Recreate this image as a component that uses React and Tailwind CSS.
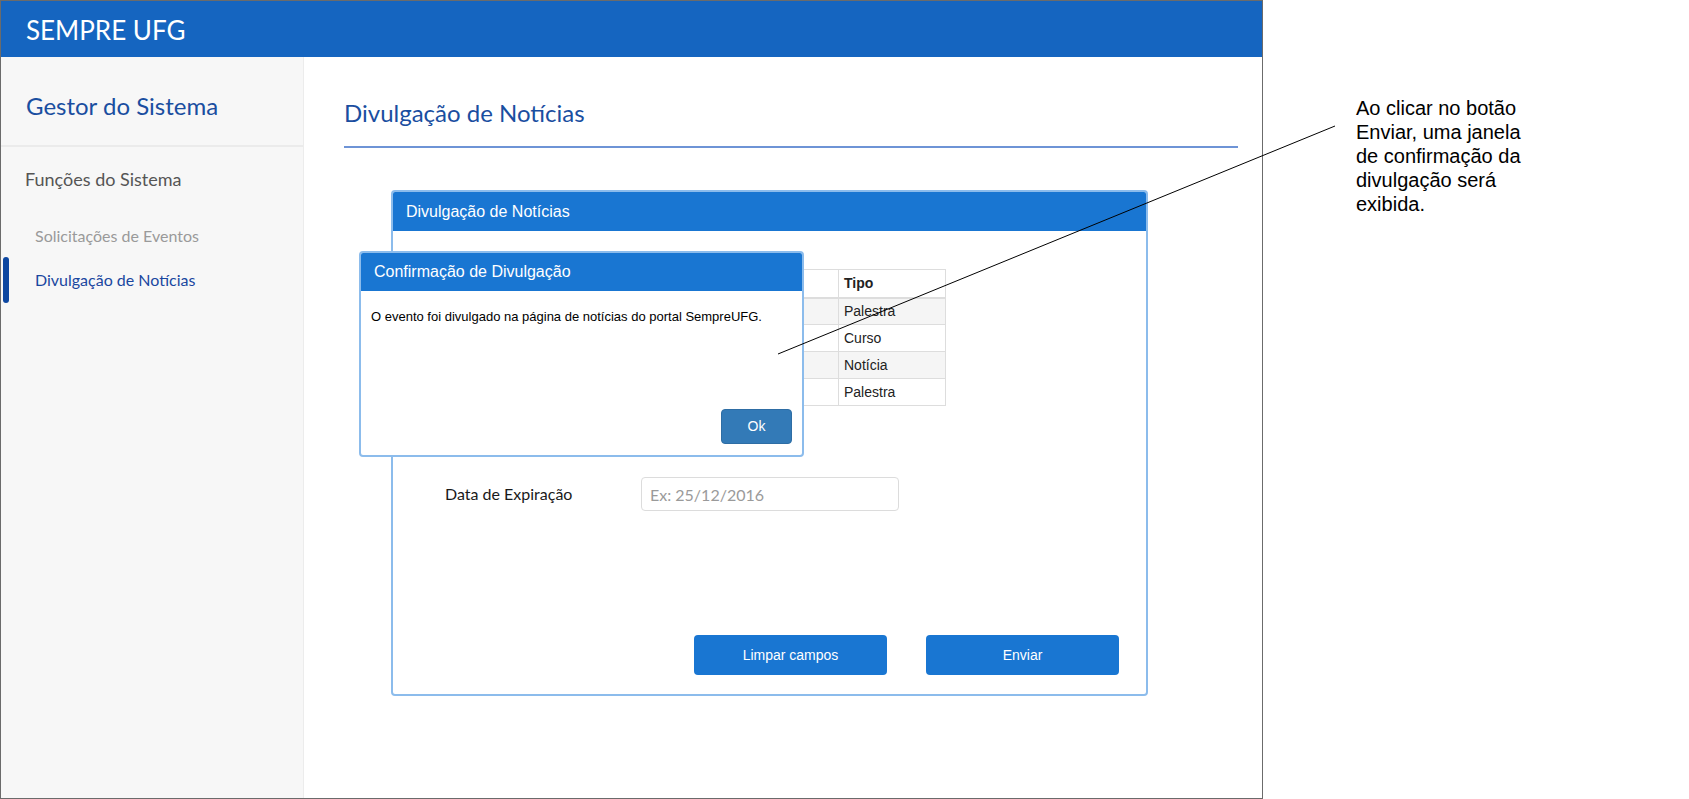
import React from "react";

const rows = [
  { t: "Semana de Integração", d: "10/11/2016", tipo: "Palestra" },
  { t: "Curso de Extensão", d: "15/11/2016", tipo: "Curso" },
  { t: "Encontro de Egressos", d: "20/11/2016", tipo: "Notícia" },
  { t: "Ciclo de Debates", d: "01/12/2016", tipo: "Palestra" },
];

export default function App() {
  return (
    <div className="relative w-[1689px] h-[799px] bg-white flex items-start overflow-hidden">
      {/* Mockup frame */}
      <div className="w-[1263px] h-[799px] border border-[#6b6b6b] flex flex-col shrink-0">
        <div className="h-[56px] bg-[#1565c0] flex items-center pl-[25px] shrink-0">
          <span className="text-white text-[26px] leading-none font-['Lato',sans-serif] pt-[2px]">SEMPRE UFG</span>
        </div>
        <div className="flex flex-1 min-h-0">
          {/* Sidebar */}
          <div className="w-[303px] bg-[#f7f7f7] border-r border-[#ececec] shrink-0 font-['Lato',sans-serif]">
            <div className="h-[90px] border-b-2 border-[#ebebeb] pl-[25px] pt-[34px]">
              <div className="text-[24px] leading-[30px] text-[#1a4ea0]">Gestor do Sistema</div>
            </div>
            <div className="pl-[24px] mt-[20px] text-[18px] leading-[24px] text-[#555]">Funções do Sistema</div>
            <div className="mt-[23px] flex flex-col">
              <div className="h-[44px] flex items-center">
                <div className="w-[6px] h-[44px] ml-[2px] rounded-full"></div>
                <span className="ml-[26px] text-[16px] text-[#9a9a9a]">Solicitações de Eventos</span>
              </div>
              <div className="h-[46px] flex items-center -mt-[1px]">
                <div className="w-[6px] h-[46px] ml-[2px] rounded-full bg-[#0d47a1]"></div>
                <span className="ml-[26px] text-[16px] text-[#1a47a0]">Divulgação de Notícias</span>
              </div>
            </div>
          </div>
          {/* Main */}
          <div className="flex-1 pl-[40px] pr-[24px] pt-[41px]">
            <div className="text-[24px] leading-[30px] text-[#1a4ea0] font-['Lato',sans-serif]">Divulgação de Notícias</div>
            <div className="mt-[18px] h-[2px] bg-[#6e94d6]"></div>
            <div className="ml-[47px] mt-[42px] w-[757px] h-[506px] rounded-[4px] border-2 border-[#8cbcec] overflow-hidden flex flex-col">
              <div className="h-[39px] bg-[#1976d2] flex items-center pl-[13px] shrink-0">
                <span className="text-white text-[16px] font-['Liberation_Sans',Arial,sans-serif]">Divulgação de Notícias</span>
              </div>
              <div className="flex-1 flex flex-col pl-[52px]">
                <table className="mt-[38px] w-[500px] table-fixed border-collapse text-[14px] text-[#222] font-['Liberation_Sans',Arial,sans-serif]">
                  <colgroup>
                    <col className="w-[250px]" />
                    <col className="w-[143px]" />
                    <col className="w-[107px]" />
                  </colgroup>
                  <thead>
                    <tr className="h-[28px]">
                      <th className="border border-[#dddddd] border-b-2 text-left font-bold px-[5px]">Título</th>
                      <th className="border border-[#dddddd] border-b-2 text-left font-bold px-[5px]">Data</th>
                      <th className="border border-[#dddddd] border-b-2 text-left font-bold px-[5px]">Tipo</th>
                    </tr>
                  </thead>
                  <tbody>
                    {rows.map((r, i) => (
                      <tr key={i} className={i % 2 === 0 ? "h-[27px] bg-[#f5f5f5]" : "h-[27px] bg-white"}>
                        <td className="border border-[#dddddd] px-[5px]">{r.t}</td>
                        <td className="border border-[#dddddd] px-[5px]">{r.d}</td>
                        <td className="border border-[#dddddd] px-[5px]">{r.tipo}</td>
                      </tr>
                    ))}
                  </tbody>
                </table>
                <div className="mt-[71px] flex items-center font-['Lato',sans-serif]">
                  <span className="w-[196px] text-[16px] text-[#1a1a1a]">Data de Expiração</span>
                  <input
                    className="w-[258px] h-[34px] rounded-[4px] border border-[#dcdcdc] px-[8px] text-[16px] text-[#555] placeholder:text-[#9a9a9a] outline-none font-['Lato',sans-serif]"
                    placeholder="Ex: 25/12/2016"
                  />
                </div>
                <div className="mt-auto mb-[19px] flex justify-end pr-[27px] gap-[39px] font-['Liberation_Sans',Arial,sans-serif]">
                  <button className="w-[193px] h-[40px] rounded-[4px] bg-[#1976d2] text-white text-[14px]">Limpar campos</button>
                  <button className="w-[193px] h-[40px] rounded-[4px] bg-[#1976d2] text-white text-[14px]">Enviar</button>
                </div>
              </div>
            </div>
          </div>
        </div>
      </div>

      {/* Annotation */}
      <div className="pl-[93px] pt-[96px] text-[20px] leading-[24px] text-black font-['Liberation_Sans',Arial,sans-serif]">
        Ao clicar no botão<br />
        Enviar, uma janela<br />
        de confirmação da<br />
        divulgação será<br />
        exibida.
      </div>

      {/* Modal dialog */}
      <div className="absolute left-[359px] top-[251px] w-[445px] h-[206px] bg-white rounded-[4px] border-2 border-[#8cbcec] overflow-hidden flex flex-col font-['Liberation_Sans',Arial,sans-serif]">
        <div className="h-[38px] bg-[#1976d2] flex items-center pl-[13px] shrink-0">
          <span className="text-white text-[16px]">Confirmação de Divulgação</span>
        </div>
        <div className="pl-[10px] pt-[17px] text-[13px] leading-[18px] text-black">
          O evento foi divulgado na página de notícias do portal SempreUFG.
        </div>
        <div className="mt-auto mb-[11px] mr-[10px] flex justify-end">
          <button className="w-[71px] h-[35px] rounded-[4px] bg-[#337ab7] border border-[#2e6da4] text-white text-[14px]">Ok</button>
        </div>
      </div>

      {/* Connector line */}
      <svg className="absolute left-0 top-0 pointer-events-none" width="1689" height="799">
        <line x1="1335" y1="126" x2="778" y2="354" stroke="#000" strokeWidth="1" />
      </svg>
    </div>
  );
}
